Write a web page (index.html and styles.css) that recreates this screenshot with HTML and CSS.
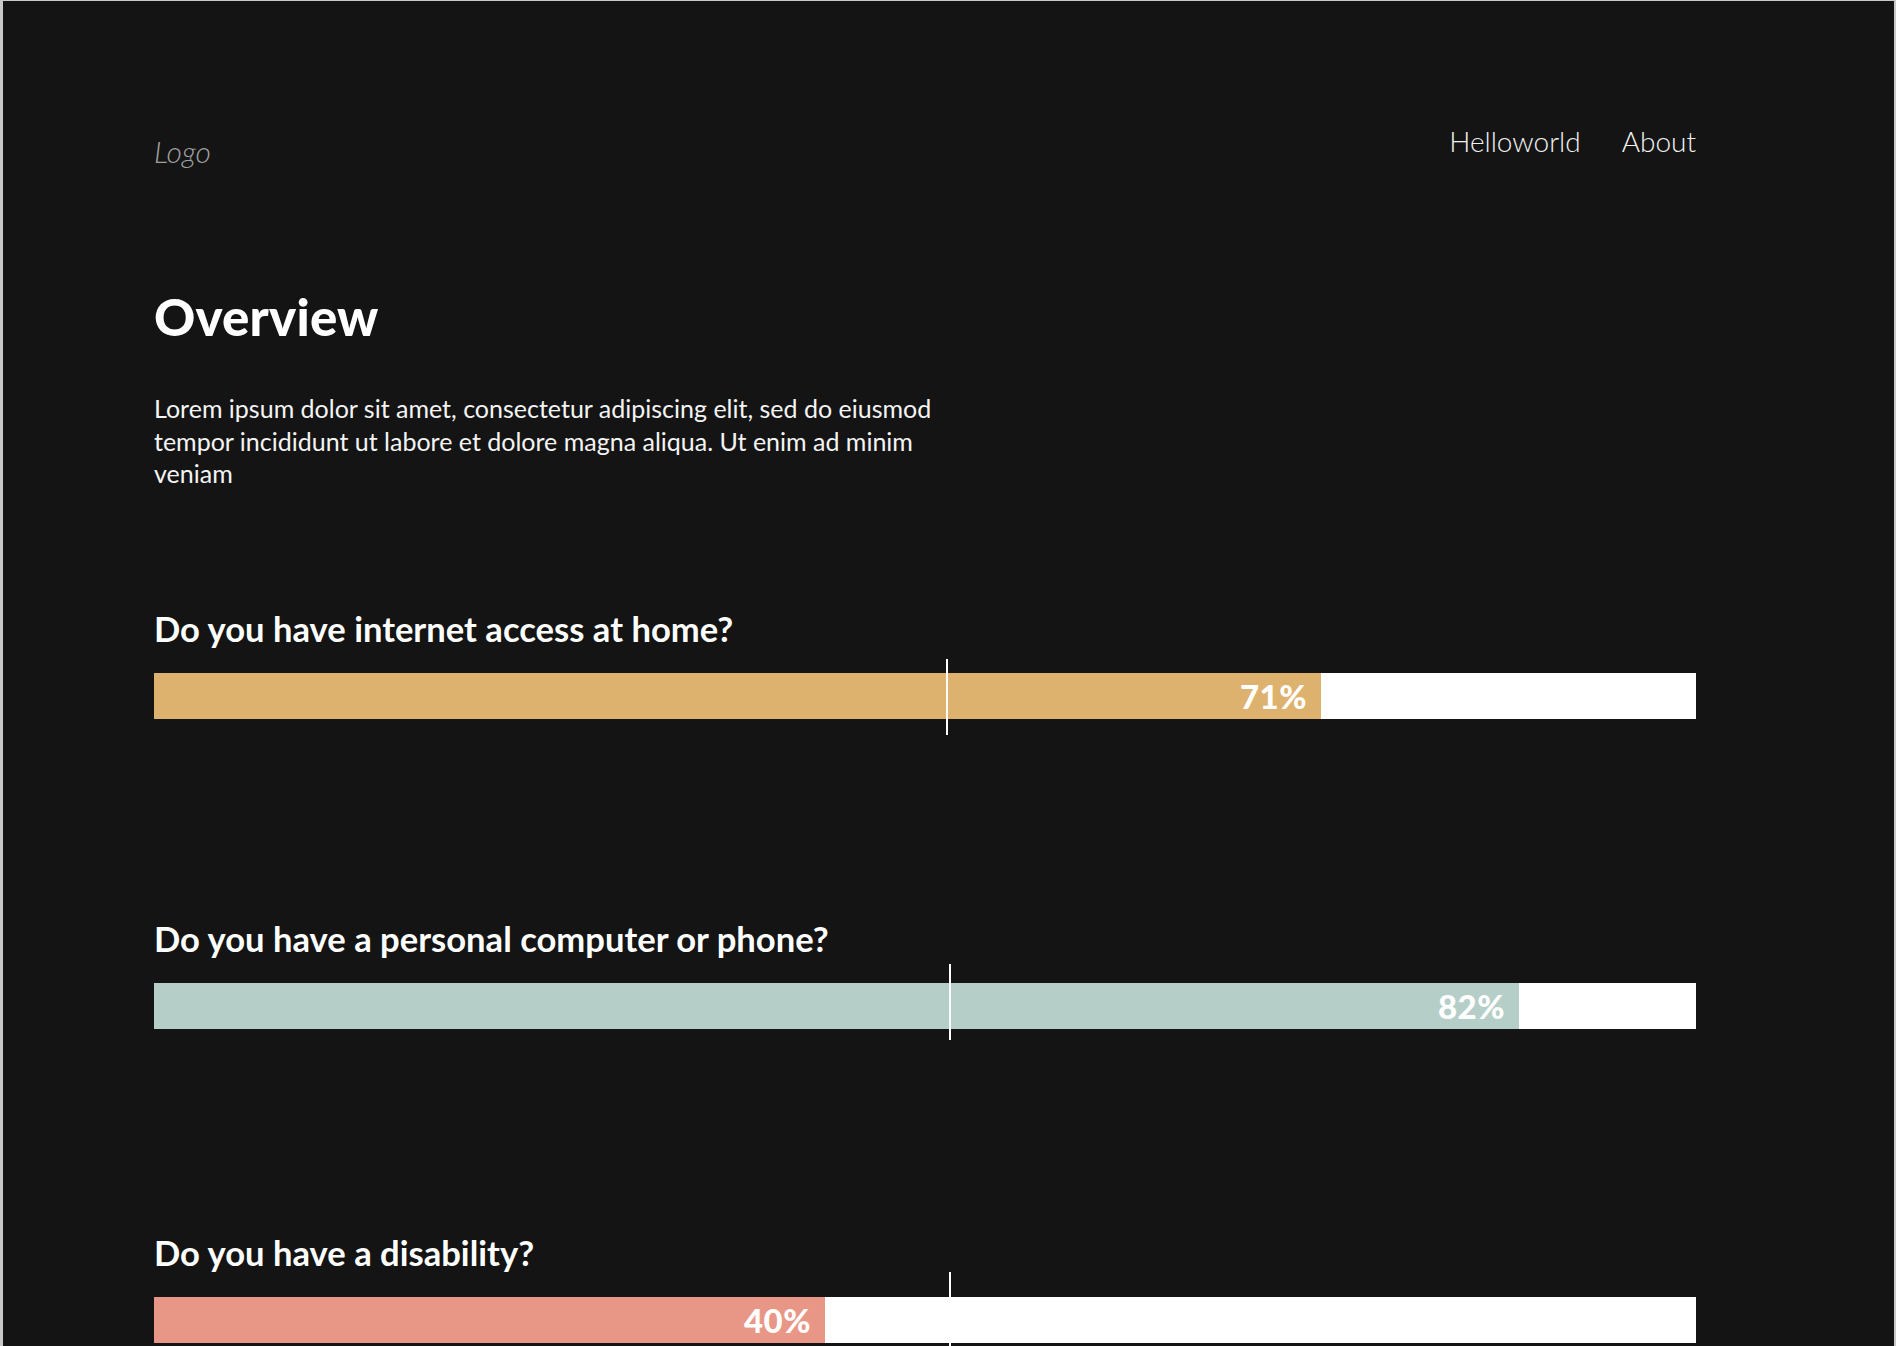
FILE: index.html
```html
<!DOCTYPE html>
<html lang="en">
<head>
<meta charset="utf-8">
<title>Overview</title>
<link rel="stylesheet" href="styles.css">
</head>
<body>
<div class="page">
  <header class="header">
    <div class="logo">Logo</div>
    <nav class="nav">
      <a class="nav-link" href="#">Helloworld</a>
      <a class="nav-link" href="#">About</a>
    </nav>
  </header>
  <main class="content">
    <h1 class="title">Overview</h1>
    <p class="intro">Lorem ipsum dolor sit amet, consectetur adipiscing elit, sed do eiusmod tempor incididunt ut labore et dolore magna aliqua. Ut enim ad minim veniam</p>

    <section class="question q1">
      <h2 class="question-title">Do you have internet access at home?</h2>
      <div class="chart">
        <div class="bar">
          <div class="fill fill-gold" style="width: 1167px;"><span class="pct">71%</span></div>
        </div>
        <div class="marker marker-1" style="left: 792px;"></div>
      </div>
    </section>

    <section class="question q2">
      <h2 class="question-title">Do you have a personal computer or phone?</h2>
      <div class="chart">
        <div class="bar">
          <div class="fill fill-sage" style="width: 1365px;"><span class="pct">82%</span></div>
        </div>
        <div class="marker marker-2" style="left: 795px;"></div>
      </div>
    </section>

    <section class="question q3">
      <h2 class="question-title">Do you have a disability?</h2>
      <div class="chart">
        <div class="bar">
          <div class="fill fill-salmon" style="width: 671px;"><span class="pct">40%</span></div>
        </div>
        <div class="marker marker-3" style="left: 795px;"></div>
      </div>
    </section>
  </main>
</div>
</body>
</html>
```

FILE: styles.css
```css
html {
  background: #c9c9c9;
}

body {
  margin: 0;
  padding: 1px 2px 0 3px;
  font-family: "Lato", "Liberation Sans", sans-serif;
  color: #ffffff;
}

.page {
  background: #141414;
  min-height: 1345px;
  padding: 0 198px 0 151px;
  overflow: hidden;
}

.header {
  display: flex;
  justify-content: space-between;
  align-items: flex-start;
  padding-top: 123px;
}

.logo {
  font-size: 30px;
  line-height: 34px;
  font-style: italic;
  font-weight: 300;
  color: #a0a0a0;
  margin-top: 10px;
}

.nav {
  display: flex;
  gap: 41px;
}

.nav-link {
  color: #f2f2f2;
  text-decoration: none;
  font-size: 28px;
  line-height: 34px;
  font-weight: 300;
}

.content {
  width: 1542px;
}

.title {
  margin: 119px 0 0;
  font-size: 51px;
  line-height: 60px;
  font-weight: 900;
  letter-spacing: 0.2px;
}

.intro {
  margin: 45px 0 0;
  max-width: 800px;
  font-size: 25px;
  line-height: 32.5px;
  font-weight: 400;
  color: #f4f4f4;
}

.question {
  margin-top: 119px;
}

.q2, .q3 {
  margin-top: 0;
}

.q2 {
  padding-top: 200px;
}

.q3 {
  padding-top: 204px;
}

.question-title {
  margin: 0;
  font-size: 34.6px;
  line-height: 40px;
  font-weight: 700;
}

.chart {
  position: relative;
  margin-top: 24px;
}

.bar {
  height: 46px;
  background: #ffffff;
  display: flex;
}

.fill {
  height: 100%;
  display: flex;
  align-items: center;
  justify-content: flex-end;
  box-sizing: border-box;
  padding-right: 14px;
}

.fill-gold { background: #ddb26e; }
.fill-sage { background: #b5cec7; }
.fill-salmon { background: #e89787; }

.pct {
  font-size: 33px;
  font-weight: 900;
  color: #ffffff;
  letter-spacing: 0.5px;
}

.marker {
  position: absolute;
  width: 2px;
  background: #ffffff;
  height: 76px;
}

.marker-1 { top: -14px; }
.marker-2 { top: -19px; }
.marker-3 { top: -25px; }
```
